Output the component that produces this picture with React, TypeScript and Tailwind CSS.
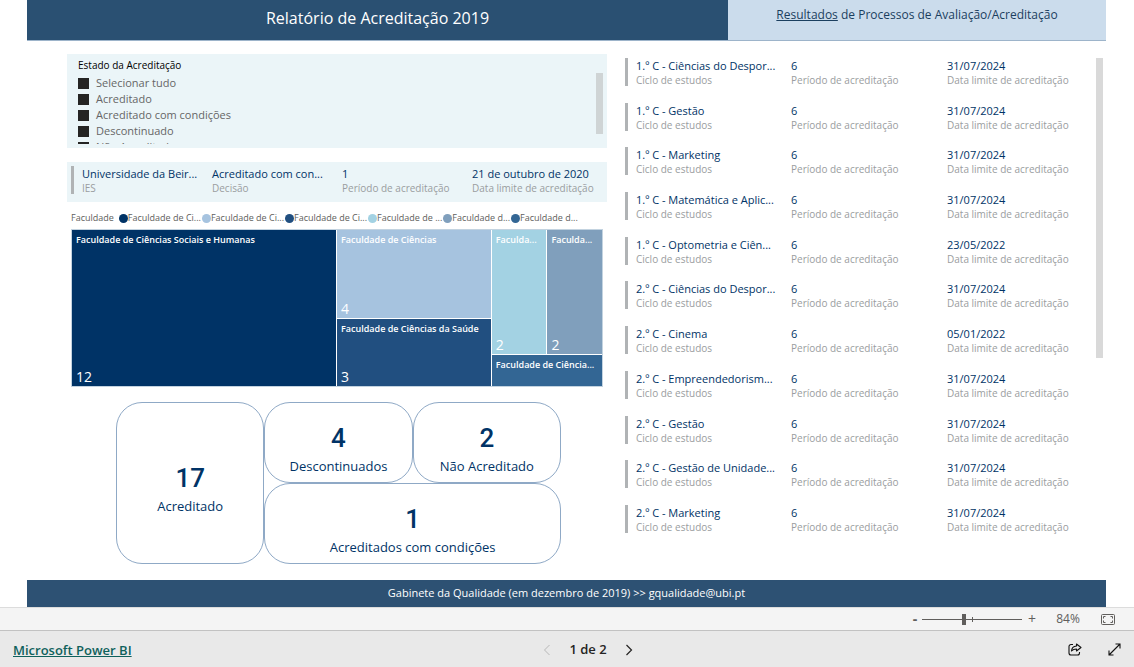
import { useState } from 'react'

const estados = [
  'Selecionar tudo',
  'Acreditado',
  'Acreditado com condições',
  'Descontinuado',
  'Não Acreditado',
]

const instituicao = [
  { value: 'Universidade da Beir...', label: 'IES' },
  { value: 'Acreditado com con...', label: 'Decisão' },
  { value: '1', label: 'Período de acreditação' },
  { value: '21 de outubro de 2020', label: 'Data limite de acreditação' },
]

const legenda = [
  { name: 'Faculdade de Ci...', color: 'bg-[#003366]' },
  { name: 'Faculdade de Ci...', color: 'bg-[#a6c3df]' },
  { name: 'Faculdade de Ci...', color: 'bg-[#214f80]' },
  { name: 'Faculdade de ...', color: 'bg-[#a3d2e3]' },
  { name: 'Faculdade d...', color: 'bg-[#809fbc]' },
  { name: 'Faculdade d...', color: 'bg-[#336694]' },
]

const ciclos = [
  { name: '1.º C - Ciências do Despor...', date: '31/07/2024' },
  { name: '1.º C - Gestão', date: '31/07/2024' },
  { name: '1.º C - Marketing', date: '31/07/2024' },
  { name: '1.º C - Matemática e Aplic...', date: '31/07/2024' },
  { name: '1.º C - Optometria e Ciên...', date: '23/05/2022' },
  { name: '2.º C - Ciências do Despor...', date: '31/07/2024' },
  { name: '2.º C - Cinema', date: '05/01/2022' },
  { name: '2.º C - Empreendedorism...', date: '31/07/2024' },
  { name: '2.º C - Gestão', date: '31/07/2024' },
  { name: '2.º C - Gestão de Unidade...', date: '31/07/2024' },
  { name: '2.º C - Marketing', date: '31/07/2024' },
]

function Field({ value, label }: { value: string; label: string }) {
  return (
    <div className="flex flex-col-reverse justify-end min-w-0 whitespace-nowrap">
      <dt className="text-[10px] leading-[14px] text-[#9a9da0]">{label}</dt>
      <dd className="text-[11px] leading-[15px] text-[#003366]">{value}</dd>
    </div>
  )
}

function Tile({ name, count, className }: { name: string; count?: number; className: string }) {
  return (
    <div className={`flex flex-col justify-between overflow-hidden min-w-0 px-1 pt-1 pb-px text-white whitespace-nowrap ${className}`}>
      <span className="text-[9px] leading-3 font-semibold">{name}</span>
      {count && <span className="text-sm leading-4">{count}</span>}
    </div>
  )
}

function Stat({ value, label, className = '' }: { value: number; label: string; className?: string }) {
  return (
    <div className={`flex flex-col items-center justify-center border border-[#8fa9c6] rounded-[26px] text-[#003366] pt-3 ${className}`}>
      <span className="font-['Roboto',sans-serif] font-medium text-[26px] leading-8">{value}</span>
      <span className="text-[13px] leading-5 mt-0.5">{label}</span>
    </div>
  )
}

export default function App() {
  const [zoom, setZoom] = useState(84)

  return (
    <div className="min-h-screen flex flex-col bg-white font-['Open_Sans','Noto_Sans',sans-serif]">
      <main className="mx-[27px] mr-7">
        <header className="grid grid-cols-[701fr_378fr] h-[41px] border-b border-[#9db4ca]">
          <h1 className="bg-[#2a5072] text-white text-base leading-9 text-center font-medium">
            Relatório de Acreditação 2019
          </h1>
          <p className="bg-[#cbdcec] text-[#1b3f5f] text-xs leading-[30px] text-center">
            <a href="#resultados" className="underline">Resultados</a> de Processos de Avaliação/Acreditação
          </p>
        </header>

        <div className="grid grid-cols-[540fr_478fr] gap-[18px] pl-10 pr-[3px] pt-[13px] pb-4">
          <section>
            <fieldset className="flex bg-[#ebf5f8] h-[94px] pl-[11px] pr-1 pb-1">
              <div className="flex-1 overflow-hidden">
                <legend className="text-[10px] leading-4 pt-[3px] mb-0.5 text-black">Estado da Acreditação</legend>
                {estados.map((estado) => (
                  <label key={estado} className="flex items-center gap-[7px] h-4 text-[11px] text-[#666]">
                    <input type="checkbox" className="appearance-none size-[11px] bg-[#252423]" />
                    {estado}
                  </label>
                ))}
              </div>
              <div className="w-[7px] h-[61px] mt-[19px] bg-[#cfd4d5]" />
            </fieldset>

            <div className="flex bg-[#ebf5f8] h-10 mt-[14px] pl-1 pt-1">
              <div className="w-[3px] h-7 bg-[#b0b3b5]" />
              <dl className="grid grid-cols-4 flex-1 pl-2 pr-[5px]">
                {instituicao.map((item) => (
                  <Field key={item.label} {...item} />
                ))}
              </dl>
            </div>

            <div className="flex items-center gap-px pl-1 mt-2 h-4 text-[9px] text-[#605e5c] whitespace-nowrap">
              <span className="mr-1">Faculdade</span>
              {legenda.map((item, i) => (
                <span key={i} className="flex items-center">
                  <span className={`size-[9px] rounded-full ${item.color}`} />
                  {item.name}
                </span>
              ))}
            </div>

            <div className="grid grid-cols-[266fr_155fr_111fr] gap-px ml-1 mr-1 mt-[3px] h-[158px] border border-[#c3d3e0]">
              <Tile name="Faculdade de Ciências Sociais e Humanas" count={12} className="bg-[#003366]" />
              <div className="grid grid-rows-[89fr_67fr] gap-px min-w-0">
                <Tile name="Faculdade de Ciências" count={4} className="bg-[#a6c3df]" />
                <Tile name="Faculdade de Ciências da Saúde" count={3} className="bg-[#214f80]" />
              </div>
              <div className="grid grid-rows-[125fr_31fr] gap-px min-w-0">
                <div className="grid grid-cols-2 gap-px">
                  <Tile name="Faculda..." count={2} className="bg-[#a3d2e3]" />
                  <Tile name="Faculda..." count={2} className="bg-[#809fbc]" />
                </div>
                <Tile name="Faculdade de Ciência..." className="bg-[#336694]" />
              </div>
            </div>

            <div className="grid grid-cols-3 grid-rows-2 h-[162px] mt-[15px] ml-[49px] mr-[46px]">
              <Stat value={17} label="Acreditado" className="row-span-2" />
              <Stat value={4} label="Descontinuados" />
              <Stat value={2} label="Não Acreditado" />
              <Stat value={1} label="Acreditados com condições" className="col-span-2" />
            </div>
          </section>

          <section className="flex pt-1">
            <ul className="flex flex-col justify-between flex-1 h-[475px]">
              {ciclos.map((ciclo) => (
                <li key={ciclo.name} className="flex h-7">
                  <div className="w-[3px] bg-[#b0b3b5]" />
                  <dl className="grid grid-cols-[155fr_156fr_149fr] flex-1 pl-2">
                    <Field value={ciclo.name} label="Ciclo de estudos" />
                    <Field value="6" label="Período de acreditação" />
                    <Field value={ciclo.date} label="Data limite de acreditação" />
                  </dl>
                </li>
              ))}
            </ul>
            <div className="w-[7px] h-[300px] bg-[#d9d9d9]" />
          </section>
        </div>

        <footer className="bg-[#2d5173] text-white text-[11px] leading-[26px] pb-px text-center">
          Gabinete da Qualidade (em dezembro de 2019) &gt;&gt; gqualidade@ubi.pt
        </footer>
      </main>

      <div className="flex items-center justify-end h-[23px] pr-[19px] bg-[#f4f4f4] border-t border-[#dcdcdc] text-xs text-[#605e5c]">
        <button type="button" aria-label="Reduzir" className="w-3 text-sm font-bold leading-4">-</button>
        <div className="relative flex items-center w-[100px] ml-px">
          <input
            type="range"
            aria-label="Zoom"
            min={0}
            max={200}
            value={zoom}
            onChange={(e) => setZoom(Number(e.target.value))}
            className="appearance-none w-full h-px bg-[#605e5c] [&::-webkit-slider-thumb]:appearance-none [&::-webkit-slider-thumb]:w-1 [&::-webkit-slider-thumb]:h-[11px] [&::-webkit-slider-thumb]:bg-[#605e5c]"
          />
          <span className="absolute left-1/2 w-px h-[5px] bg-[#605e5c]" />
        </div>
        <button type="button" aria-label="Ampliar" className="ml-1 w-3 text-sm leading-4">+</button>
        <span className="ml-4 w-7 text-center">{zoom}%</span>
        <button type="button" aria-label="Ajustar à página" className="ml-[19px]">
          <svg width="14" height="11" viewBox="0 0 14 11" fill="none" stroke="#605e5c">
            <rect x="0.5" y="0.5" width="13" height="10" rx="1" />
            <path d="M4.500 2.500H2.500V4.500M9.500 2.500h2V4.500M4.500 8.500H2.500V6.500M9.500 8.500h2V6.500" />
          </svg>
        </button>
      </div>

      <nav className="grid grid-cols-3 items-center flex-1 min-h-9 px-[13px] pt-px bg-[#e9e9e9] border-t border-[#c2c2c2]">
        <a href="https://powerbi.microsoft.com" className="justify-self-start pt-0.5 text-[13px] text-[#0f615c] font-semibold underline">
          Microsoft Power BI
        </a>
        <div className="flex items-center justify-center gap-[18px] pl-[42px]">
          <button type="button" aria-label="Página anterior" disabled>
            <svg width="8" height="12" viewBox="0 0 8 12" fill="none" stroke="#b8b8b8">
              <path d="M6.5 1L1.5 6l5 5" />
            </svg>
          </button>
          <span className="text-[13px] font-semibold text-[#252423]">1 de 2</span>
          <button type="button" aria-label="Página seguinte">
            <svg width="8" height="12" viewBox="0 0 8 12" fill="none" stroke="#252423" strokeWidth="1.2">
              <path d="M1.5 1l5 5-5 5" />
            </svg>
          </button>
        </div>
        <div className="flex items-center justify-end gap-[26px]">
          <button type="button" aria-label="Partilhar">
            <svg width="14" height="13" viewBox="0 0 14 13" fill="none" stroke="#111" strokeWidth="1.1">
              <path d="M5 1.500H3a2 2 0 0 0-2 2V10a2 2 0 0 0 2 2h6.500a2 2 0 0 0 2-2V9" />
              <path d="M8.500 1L13 4.500 8.500 8V6C6.500 6 4.800 6.500 3.500 8 3.700 5.200 5.500 3.200 8.500 3z" strokeLinejoin="round" />
            </svg>
          </button>
          <button type="button" aria-label="Ecrã inteiro">
            <svg width="13" height="13" viewBox="0 0 13 13" fill="none" stroke="#111" strokeWidth="1.1">
              <path d="M1 12L12 1M7.500 1H12v4.500M1 7.500V12h4.500" />
            </svg>
          </button>
        </div>
      </nav>
    </div>
  )
}
